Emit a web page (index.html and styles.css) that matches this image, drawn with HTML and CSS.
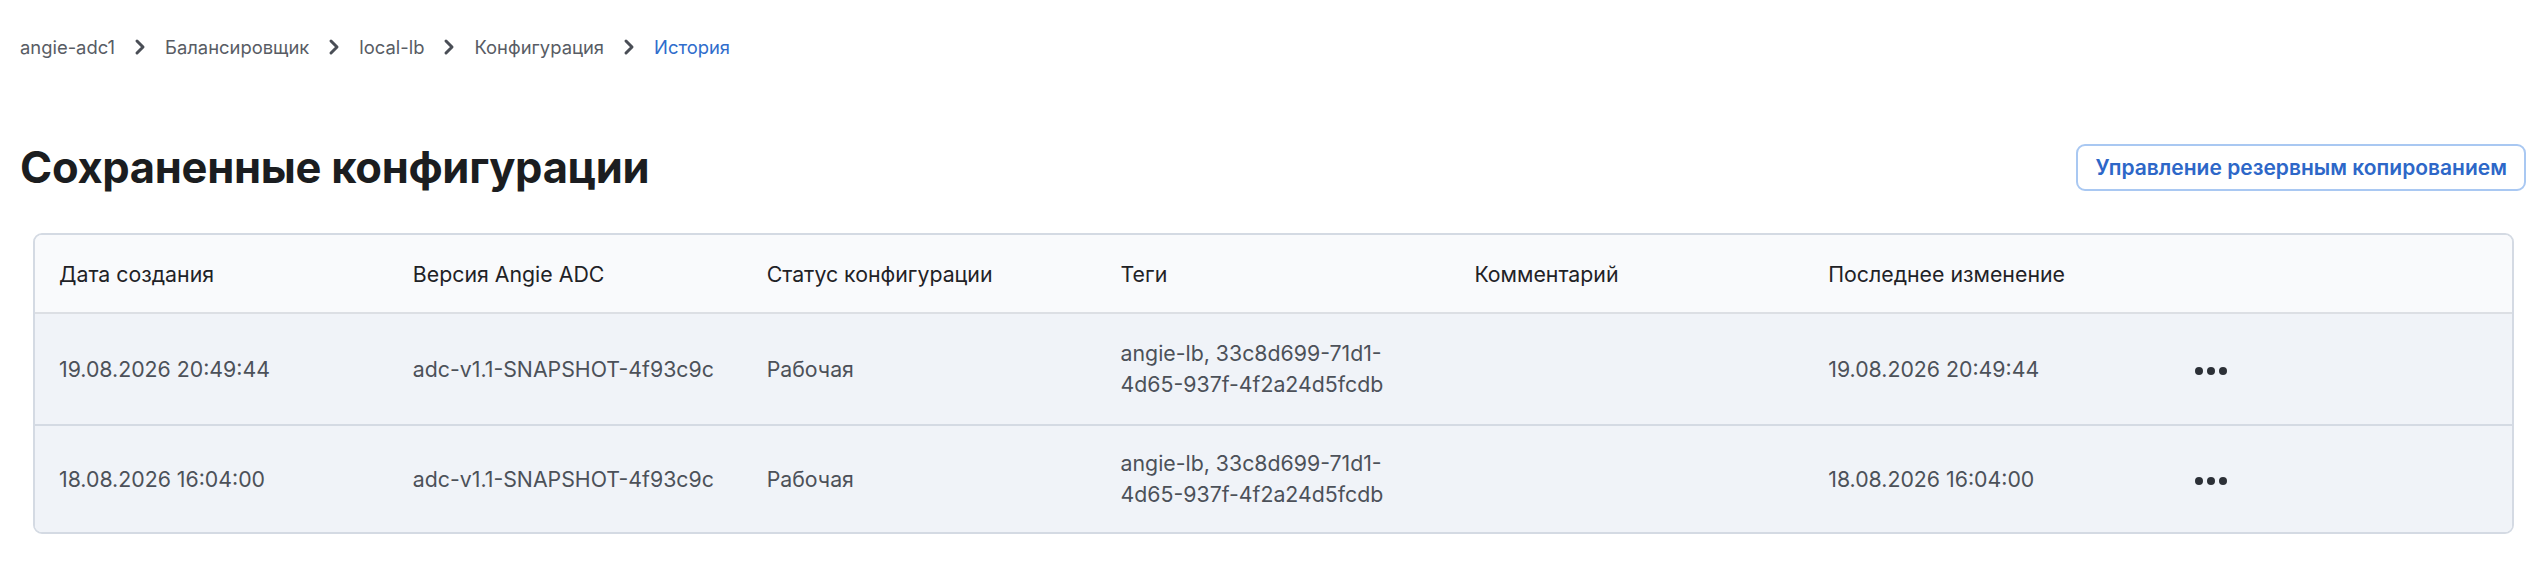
FILE: index.html
```html
<!DOCTYPE html>
<html lang="ru">
<head>
<meta charset="utf-8">
<title>История</title>
<link rel="stylesheet" href="styles.css">
</head>
<body>
<div class="page">
  <nav class="crumbs">
    <span class="crumb">angie-adc1</span>
    <svg class="chev" viewBox="0 0 12 18"><path d="M3 3l6 6-6 6" fill="none" stroke="currentColor" stroke-width="3" stroke-linecap="round" stroke-linejoin="round"/></svg>
    <span class="crumb">Балансировщик</span>
    <svg class="chev" viewBox="0 0 12 18"><path d="M3 3l6 6-6 6" fill="none" stroke="currentColor" stroke-width="3" stroke-linecap="round" stroke-linejoin="round"/></svg>
    <span class="crumb">local-lb</span>
    <svg class="chev" viewBox="0 0 12 18"><path d="M3 3l6 6-6 6" fill="none" stroke="currentColor" stroke-width="3" stroke-linecap="round" stroke-linejoin="round"/></svg>
    <span class="crumb">Конфигурация</span>
    <svg class="chev" viewBox="0 0 12 18"><path d="M3 3l6 6-6 6" fill="none" stroke="currentColor" stroke-width="3" stroke-linecap="round" stroke-linejoin="round"/></svg>
    <span class="crumb current">История</span>
  </nav>

  <header class="head">
    <h1 class="title">Сохраненные конфигурации</h1>
    <button class="btn">Управление резервным копированием</button>
  </header>

  <div class="table-wrap">
    <table class="grid">
      <thead>
        <tr>
          <th>Дата создания</th>
          <th>Версия Angie ADC</th>
          <th>Статус конфигурации</th>
          <th>Теги</th>
          <th>Комментарий</th>
          <th>Последнее изменение</th>
          <th class="act"></th>
        </tr>
      </thead>
      <tbody>
        <tr>
          <td>19.08.2026 20:49:44</td>
          <td>adc-v1.1-SNAPSHOT-4f93c9c</td>
          <td>Рабочая</td>
          <td>angie-lb, 33c8d699-71d1-4d65-937f-4f2a24d5fcdb</td>
          <td></td>
          <td>19.08.2026 20:49:44</td>
          <td class="act"><span class="dots"><i></i><i></i><i></i></span></td>
        </tr>
        <tr>
          <td>18.08.2026 16:04:00</td>
          <td>adc-v1.1-SNAPSHOT-4f93c9c</td>
          <td>Рабочая</td>
          <td>angie-lb, 33c8d699-71d1-4d65-937f-4f2a24d5fcdb</td>
          <td></td>
          <td>18.08.2026 16:04:00</td>
          <td class="act"><span class="dots"><i></i><i></i><i></i></span></td>
        </tr>
      </tbody>
    </table>
  </div>
</div>
</body>
</html>
```

FILE: styles.css
```css
* { box-sizing: border-box; }
html, body { margin: 0; padding: 0; background: #ffffff; }
body { font-family: Inter, "Noto Sans", sans-serif; color: #1f2226; }

.page { padding: 0 20px 0 20px; }

.crumbs {
  display: flex;
  align-items: center;
  height: 94px;
  font-size: 18.4px;
  color: #585c64;
}
.crumb { line-height: 24px; }
.crumb.current { color: #2f6dcc; }
.chev { width: 12px; height: 18px; margin: 0 19px 0 19px; color: #4a4e56; }

.head {
  display: flex;
  align-items: center;
  justify-content: space-between;
  height: 139px;
  padding-top: 7px;
}
.title {
  margin: 0;
  font-size: 43.5px;
  font-weight: 700;
  letter-spacing: -0.3px;
  color: #1b1d20;
}
.btn {
  flex: none;
  font-family: inherit;
  font-size: 21px;
  font-weight: 600;
  color: #2d67c8;
  background: #ffffff;
  border: 2px solid #a9c8f2;
  border-radius: 9px;
  height: 47px;
  padding: 0 17px;
  margin: 0 2px 0 0;
}

.table-wrap {
  margin: 0 14px 0 13px;
  border: 2px solid #d4dae3;
  border-radius: 9px;
  overflow: hidden;
}
.grid {
  width: 100%;
  border-collapse: collapse;
  table-layout: fixed;
  font-size: 21.3px;
}
.grid th {
  text-align: left;
  font-weight: 400;
  color: #1f2226;
  background: #f9fafc;
  height: 78px;
  padding: 0 24px;
  border-bottom: 2px solid #dcdfe4;
}
.grid td {
  background: #f0f3f8;
  color: #4c5159;
  padding: 22px 24px;
  line-height: 31px;
  height: 112px;
  vertical-align: middle;
  border-bottom: 2px solid #d4dae3;
}
.grid tbody tr:last-child td { border-bottom: none; height: 107px; }
.grid .act { padding-left: 37px; }

.dots { display: inline-flex; gap: 4px; vertical-align: middle; }
.dots i { display: block; width: 8px; height: 8px; border-radius: 50%; background: #2c3037; }
```
